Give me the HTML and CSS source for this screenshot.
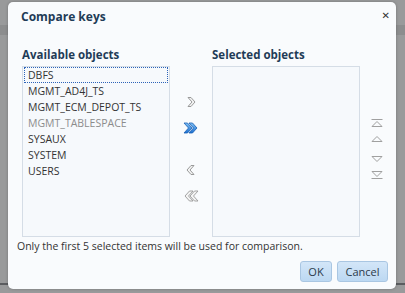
FILE: index.html
```html
<!DOCTYPE html>
<html lang="en">
<head>
  <meta charset="UTF-8" />
  <title>Compare keys</title>
  <link rel="stylesheet" href="styles.css">
</head>
<body>
  <div class="backdrop">
    <div class="bg-band"></div>
    <div class="bg-rule"></div>
  </div>

  <div class="dialog">
    <div class="dialog-head">
      <span class="dialog-title">Compare keys</span>
      <span class="close">&#x2715;</span>
    </div>

    <div class="shuttle">
      <div class="pane">
        <div class="pane-label">Available objects</div>
        <ul class="list">
          <li class="focus">DBFS</li>
          <li>MGMT_AD4J_TS</li>
          <li>MGMT_ECM_DEPOT_TS</li>
          <li class="disabled">MGMT_TABLESPACE</li>
          <li>SYSAUX</li>
          <li>SYSTEM</li>
          <li>USERS</li>
        </ul>
      </div>

      <div class="moves">
        <svg width="12" height="12" viewBox="0 0 12 12"><path d="M3 1.5 L6 1.5 L10 6 L6 10.5 L3 10.5 L7 6 Z" fill="#f4f4f4" stroke="#9a9a9a" stroke-width="1"/></svg>
        <svg class="gap-s" width="16" height="12" viewBox="0 0 16 12"><defs><linearGradient id="bl" x1="0" y1="0" x2="0" y2="1"><stop offset="0" stop-color="#7fc0f4"/><stop offset="1" stop-color="#1b6fd0"/></linearGradient></defs><path d="M1 1 L4.5 1 L9 6 L4.5 11 L1 11 L5.5 6 Z" fill="url(#bl)" stroke="#1a5fb4" stroke-width="0.8"/><path d="M6 1 L9.5 1 L14 6 L9.5 11 L6 11 L10.5 6 Z" fill="url(#bl)" stroke="#1a5fb4" stroke-width="0.8"/></svg>
        <svg class="gap-l" width="12" height="12" viewBox="0 0 12 12"><path d="M9 1.5 L6 1.5 L2 6 L6 10.5 L9 10.5 L5 6 Z" fill="#f4f4f4" stroke="#9a9a9a" stroke-width="1"/></svg>
        <svg class="gap-s" width="16" height="12" viewBox="0 0 16 12"><path d="M10 1 L6.5 1 L2 6 L6.5 11 L10 11 L5.5 6 Z" fill="#f4f4f4" stroke="#9a9a9a" stroke-width="0.9"/><path d="M15 1 L11.5 1 L7 6 L11.5 11 L15 11 L10.5 6 Z" fill="#f4f4f4" stroke="#9a9a9a" stroke-width="0.9"/></svg>
      </div>

      <div class="pane">
        <div class="pane-label">Selected objects</div>
        <ul class="list"></ul>
      </div>

      <div class="order">
        <svg width="12" height="10" viewBox="0 0 12 10"><path d="M0.5 1.5 H11.5" stroke="#a0a0a0"/><path d="M1 8.5 L6 3.5 L11 8.5 Z" fill="none" stroke="#a0a0a0"/></svg>
        <svg width="12" height="10" viewBox="0 0 12 10"><path d="M1 7.5 L6 2.5 L11 7.5 Z" fill="none" stroke="#a0a0a0"/></svg>
        <svg class="gap-m" width="12" height="10" viewBox="0 0 12 10"><path d="M1 2.5 L6 7.5 L11 2.5 Z" fill="none" stroke="#a0a0a0"/></svg>
        <svg width="12" height="10" viewBox="0 0 12 10"><path d="M1 1.5 L6 6.5 L11 1.5 Z" fill="none" stroke="#a0a0a0"/><path d="M0.5 8.5 H11.5" stroke="#a0a0a0"/></svg>
      </div>
    </div>

    <p class="note">Only the first 5 selected items will be used for comparison.</p>

    <div class="actions">
      <button type="button" class="btn-ok">OK</button>
      <button type="button" class="btn-cancel">Cancel</button>
    </div>
  </div>
</body>
</html>
```

FILE: styles.css
```css
body {
  margin: 0;
  font-family: "Open Sans", "DejaVu Sans", sans-serif;
  font-size: 10.5px;
  color: #333;
}

.backdrop {
  width: 405px;
  height: 293px;
  background: #999a9b;
  overflow: hidden;
}

.bg-band {
  margin-top: 25px;
  height: 10px;
  background: #8c8d8e;
}

.bg-rule {
  margin-top: 248px;
  height: 2px;
  background: #5b5d60;
}

.dialog {
  position: absolute;
  left: 8px;
  top: 2px;
  width: 388px;
  height: 287px;
  box-sizing: border-box;
  background: #f9fbfd;
  border-radius: 5px;
  box-shadow: 0 0 3px rgba(0, 0, 0, 0.25);
  padding: 0 8px 0 9px;
}

.dialog-head {
  display: flex;
  justify-content: space-between;
  align-items: center;
  height: 29px;
  padding-left: 4px;
}

.dialog-title {
  font-weight: bold;
  color: #1f3c57;
  font-size: 12px;
}

.close {
  font-size: 10px;
  color: #333;
  margin-top: -4px;
  margin-right: -2px;
}

.shuttle {
  display: flex;
  padding-top: 16px;
  padding-left: 5px;
}

.pane-label {
  font-weight: bold;
  color: #1f3c57;
  font-size: 11.5px;
  height: 19px;
  line-height: 16px;
}

.list {
  list-style: none;
  margin: 0;
  padding: 0 1px;
  width: 148px;
  height: 171px;
  box-sizing: border-box;
  background: #f6f9fc;
  border: 1px solid #d5dde6;
}

.list li {
  height: 16px;
  line-height: 14px;
  padding-left: 3px;
  box-sizing: border-box;
  border: 1px solid transparent;
  color: #333;
}

.list li.focus {
  border: 1px dotted #2c63b8;
}

.list li.disabled {
  color: #8c8c8c;
}

.moves {
  width: 42px;
  display: flex;
  flex-direction: column;
  align-items: center;
  padding-top: 49px;
}

.moves svg {
  display: block;
}

.moves .gap-s {
  margin-top: 14px;
}

.moves .gap-l {
  margin-top: 30px;
}

.order {
  display: flex;
  flex-direction: column;
  padding-top: 71px;
  padding-left: 11px;
  gap: 6px;
}

.order svg {
  display: block;
}

.order .gap-m {
  margin-top: 4px;
}

.note {
  margin: 2px 0 0;
  padding-left: 0;
  font-size: 10.5px;
  color: #333;
}

.actions {
  display: flex;
  justify-content: flex-end;
  gap: 5px;
  margin-top: 8px;
  padding-right: 0;
}

.actions button {
  font-family: inherit;
  font-size: 11px;
  color: #2b3a4a;
  height: 21px;
  padding: 0;
  border: 1px solid #a9c6e2;
  border-radius: 3px;
  background: linear-gradient(#d3e6f8, #bcd8f2);
}

.actions .btn-ok {
  width: 32px;
}

.actions .btn-cancel {
  width: 51px;
}
```
